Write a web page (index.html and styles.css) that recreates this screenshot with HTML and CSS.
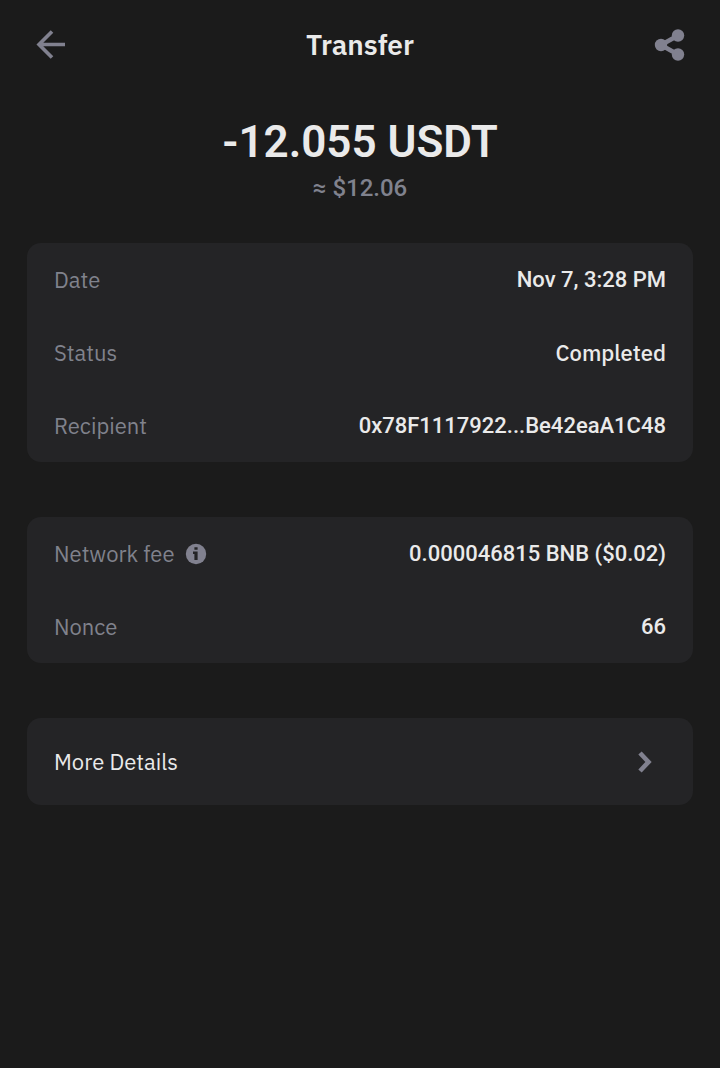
FILE: index.html
```
<!DOCTYPE html>
<html lang="en">
<head>
    <meta charset="UTF-8">
    <meta name="viewport" content="width=device-width, initial-scale=1.0">
    <title>Transfer</title>
    <link rel="stylesheet" href="styles.css">
</head>
<body>
    <header class="topbar">
        <button type="button" class="icon-button" aria-label="Back">
            <svg width="32" height="32" viewBox="0 0 32 32" fill="none" stroke="currentColor" stroke-width="3.6">
                <path d="M31 15.5H5M18 2.5l-13 13 13 13"/>
            </svg>
        </button>
        <h1>Transfer</h1>
        <button type="button" class="icon-button" aria-label="Share">
            <svg width="32" height="32" viewBox="0 0 32 32" fill="currentColor">
                <path d="M24 6.5L7 16l17 9.5" fill="none" stroke="currentColor" stroke-width="4.6"/>
                <circle cx="7" cy="16" r="6.2"/>
                <circle cx="24" cy="6.5" r="6.2"/>
                <circle cx="24" cy="25.5" r="6.2"/>
            </svg>
        </button>
    </header>

    <main class="content">
        <div class="summary">
            <p class="amount">-12.055 USDT</p>
            <p class="fiat">≈ $12.06</p>
        </div>

        <dl class="card">
            <div class="row">
                <dt>Date</dt>
                <dd class="number">Nov 7, 3:28 PM</dd>
            </div>
            <div class="row">
                <dt>Status</dt>
                <dd>Completed</dd>
            </div>
            <div class="row">
                <dt>Recipient</dt>
                <dd class="number">0x78F1117922...Be42eaA1C48</dd>
            </div>
        </dl>

        <dl class="card">
            <div class="row">
                <dt>
                    Network fee
                    <button type="button" class="info-button" aria-label="About the network fee">
                        <svg width="22" height="22" viewBox="0 0 22 22">
                            <circle cx="11" cy="11" r="10.2" fill="currentColor"/>
                            <path d="M9.4 4.2h3.2v2.6H9.4zM8 8.6h4.6V17H9.4v-6H8z" fill="#242426"/>
                        </svg>
                    </button>
                </dt>
                <dd class="number">0.000046815 BNB ($0.02)</dd>
            </div>
            <div class="row">
                <dt>Nonce</dt>
                <dd class="number">66</dd>
            </div>
        </dl>

        <a href="#" class="card more-link">
            More Details
            <svg width="16" height="24" viewBox="0 0 16 24" fill="none" stroke="currentColor" stroke-width="4.6">
                <path d="M3 3l8.5 9L3 21"/>
            </svg>
        </a>
    </main>
</body>
</html>
```
FILE: styles.css
```
* {
    box-sizing: border-box;
}
body {
    margin: 0;
    background-color: #1b1b1b;
    color: #eaeaea;
    font-family: "IBM Plex Sans", Roboto, sans-serif;
    font-size: 22px;
    line-height: 28px;
}
h1, p, dl, dd {
    margin: 0;
}
button {
    padding: 0;
    border: none;
    background: none;
    color: #81818f;
    cursor: pointer;
}
svg {
    display: block;
}
.topbar {
    display: flex;
    align-items: center;
    justify-content: space-between;
    height: 90px;
    padding: 0 34px;
}
.topbar h1 {
    font-size: 28px;
    font-weight: 600;
}
.content {
    padding: 24px 27px;
}
.summary {
    margin-bottom: 37px;
    text-align: center;
}
.amount,
.fiat,
.number {
    font-family: Roboto, sans-serif;
}
.amount {
    font-size: 44px;
    font-weight: 600;
    line-height: 56px;
}
.fiat {
    color: #80828e;
    font-size: 24px;
    font-weight: 500;
    line-height: 36px;
}
.card {
    margin-bottom: 55px;
    border-radius: 14px;
    background-color: #242426;
}
.row {
    display: flex;
    align-items: center;
    justify-content: space-between;
    height: 73px;
    padding: 0 27px;
}
.row dt {
    display: flex;
    align-items: center;
    gap: 10px;
    color: #80828c;
}
.row dd {
    font-weight: 500;
}
.more-link {
    display: flex;
    align-items: center;
    justify-content: space-between;
    height: 87px;
    padding: 0 40px 0 27px;
    color: #eaeaea;
    text-decoration: none;
}
.more-link svg {
    color: #81818f;
}
```
